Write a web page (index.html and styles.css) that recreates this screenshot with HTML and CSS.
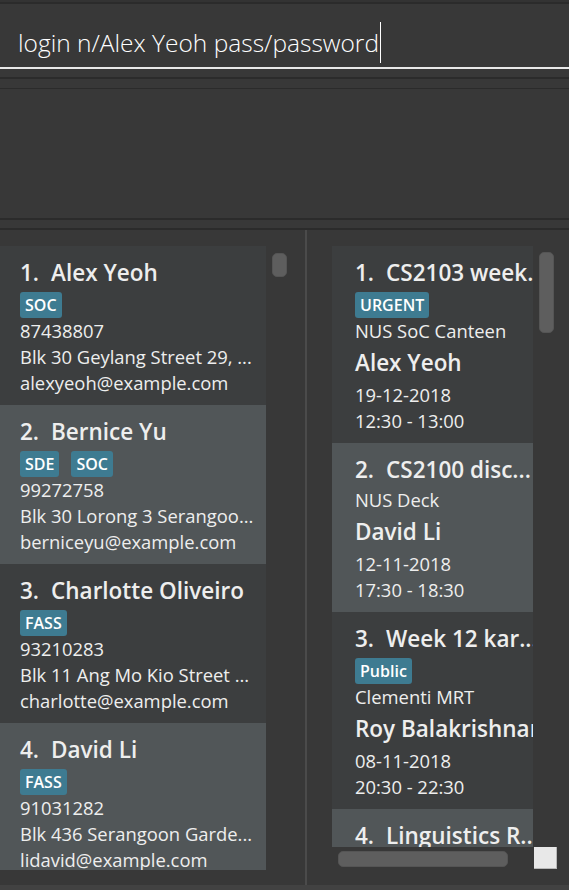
FILE: index.html
```html
<!DOCTYPE html>
<html>
<head>
<meta charset="utf-8">
<link rel="stylesheet" href="styles.css">
</head>
<body>
<div class="top-edge"></div>
<div class="command">
  <span class="command-text">login n/Alex Yeoh pass/password</span><span class="caret"></span>
</div>
<div class="gap gap-8"></div>
<div class="rule rule-2"></div>
<div class="gap gap-9"></div>
<div class="rule rule-1"></div>
<div class="result"></div>
<div class="rule rule-2"></div>
<div class="gap gap-8"></div>
<div class="rule rule-2"></div>

<div class="panels">
  <div class="left-col">
    <div class="person-list">
      <div class="pcard">
        <div class="name"><span class="num">1.</span><span>Alex Yeoh</span></div>
        <div class="tags"><span class="tag">SOC</span></div>
        <div class="detail">87438807</div>
        <div class="detail">Blk 30 Geylang Street 29, ...</div>
        <div class="detail">alexyeoh@example.com</div>
      </div>
      <div class="pcard alt">
        <div class="name"><span class="num">2.</span><span>Bernice Yu</span></div>
        <div class="tags"><span class="tag">SDE</span><span class="tag">SOC</span></div>
        <div class="detail">99272758</div>
        <div class="detail">Blk 30 Lorong 3 Serangoo...</div>
        <div class="detail">berniceyu@example.com</div>
      </div>
      <div class="pcard">
        <div class="name"><span class="num">3.</span><span>Charlotte Oliveiro</span></div>
        <div class="tags"><span class="tag">FASS</span></div>
        <div class="detail">93210283</div>
        <div class="detail">Blk 11 Ang Mo Kio Street ...</div>
        <div class="detail">charlotte@example.com</div>
      </div>
      <div class="pcard alt">
        <div class="name"><span class="num">4.</span><span>David Li</span></div>
        <div class="tags"><span class="tag">FASS</span></div>
        <div class="detail">91031282</div>
        <div class="detail">Blk 436 Serangoon Garde...</div>
        <div class="detail">lidavid@example.com</div>
      </div>
    </div>
    <div class="vbar left-vbar"><div class="thumb left-thumb"></div></div>
  </div>

  <div class="divider"></div>

  <div class="right-col">
    <div class="event-list">
      <div class="ecard">
        <div class="name"><span class="num">1.</span><span>CS2103 week...</span></div>
        <div class="tags"><span class="tag">URGENT</span></div>
        <div class="detail">NUS SoC Canteen</div>
        <div class="person">Alex Yeoh</div>
        <div class="detail">19-12-2018</div>
        <div class="detail">12:30 - 13:00</div>
      </div>
      <div class="ecard alt">
        <div class="name"><span class="num">2.</span><span>CS2100 disc...</span></div>
        <div class="detail">NUS Deck</div>
        <div class="person">David Li</div>
        <div class="detail">12-11-2018</div>
        <div class="detail">17:30 - 18:30</div>
      </div>
      <div class="ecard">
        <div class="name"><span class="num">3.</span><span>Week 12 kar...</span></div>
        <div class="tags"><span class="tag">Public</span></div>
        <div class="detail">Clementi MRT</div>
        <div class="person">Roy Balakrishnan</div>
        <div class="detail">08-11-2018</div>
        <div class="detail">20:30 - 22:30</div>
      </div>
      <div class="ecard alt">
        <div class="name"><span class="num">4.</span><span>Linguistics R...</span></div>
        <div class="detail">NUS Arts</div>
      </div>
    </div>
    <div class="vbar right-vbar"><div class="thumb right-thumb"></div></div>
    <div class="hbar"><div class="thumb h-thumb"></div></div>
    <div class="corner"></div>
  </div>
</div>
<div class="bottom-edge"></div>
</body>
</html>
```
FILE: styles.css
```css
* { box-sizing: border-box; }
html, body { margin: 0; padding: 0; }
body {
  width: 569px;
  height: 890px;
  overflow: hidden;
  background: #383838;
  font-family: "Open Sans", "Noto Sans", sans-serif;
  color: #eeeeee;
  display: flex;
  flex-direction: column;
}
.top-edge { height: 4px; flex: none; border-top: 2px solid #333333; border-bottom: 2px solid #2b2b2b; }
.command {
  height: 65px;
  flex: none;
  padding: 14px 0 0 18px;
  display: flex;
  align-items: center;
  border-bottom: 2px solid #e8e8e8;
  font-size: 24.5px;
  font-weight: 300;
  color: #ffffff;
  white-space: nowrap;
}
.caret { display: inline-block; width: 1px; height: 41px; background: #ffffff; margin-left: 1px; }
.gap { flex: none; }
.gap-8 { height: 8px; }
.gap-9 { height: 9px; }
.rule { flex: none; background: #2b2b2b; }
.rule-1 { height: 1px; }
.rule-2 { height: 2px; }
.result { height: 129px; flex: none; }

.panels { height: 655px; flex: none; display: flex; }
.left-col { width: 305px; padding-top: 16px; display: flex; }
.person-list { width: 266px; height: 624px; overflow: hidden; }
.vbar { width: 24px; }
.left-vbar { padding: 7px 3px 0 6px; }
.thumb { background: #5e5e5e; border-radius: 5px; border: 1px solid #555555; }
.left-thumb { width: 15px; height: 24px; }
.divider { width: 2px; background: #4b4b4b; }

.right-col {
  flex: 1;
  padding: 16px 0 0 25px;
  display: grid;
  grid-template-columns: 201px 24px;
  grid-template-rows: 601px 22px;
}
.event-list { overflow: hidden; }
.right-vbar { padding: 6px 3px 0 6px; }
.right-thumb { width: 15px; height: 81px; }
.hbar { padding: 4px 0 0 6px; }
.h-thumb { width: 170px; height: 16px; }
.corner { margin-left: 1px; width: 23px; height: 22px; background: #e8e8e8; border-right: 1px solid #b8b8b8; border-bottom: 1px solid #b8b8b8; }

.pcard { height: 159px; padding: 10px 0 0 20px; background: #3c3e3f; }
.ecard { width: 240px; padding: 10px 0 9px 23px; background: #3c3e3f; }
.alt { background: #515658; }

.name {
  display: flex;
  font-size: 22.5px;
  font-weight: 600;
  line-height: 34px;
  white-space: nowrap;
}
.num { margin-right: 12px; }
.tags { display: flex; gap: 12px; margin-top: 2px; height: 26px; }
.tag {
  background: #3e7b91;
  color: #ffffff;
  font-size: 16px;
  font-weight: 600;
  line-height: 26px;
  padding: 0 5px;
  border-radius: 3px;
}
.detail { font-size: 18.4px; line-height: 26px; white-space: nowrap; }
.person { font-size: 22.5px; font-weight: 600; line-height: 38px; white-space: nowrap; }
.bottom-edge { flex: 1; background: #424242; }
```
